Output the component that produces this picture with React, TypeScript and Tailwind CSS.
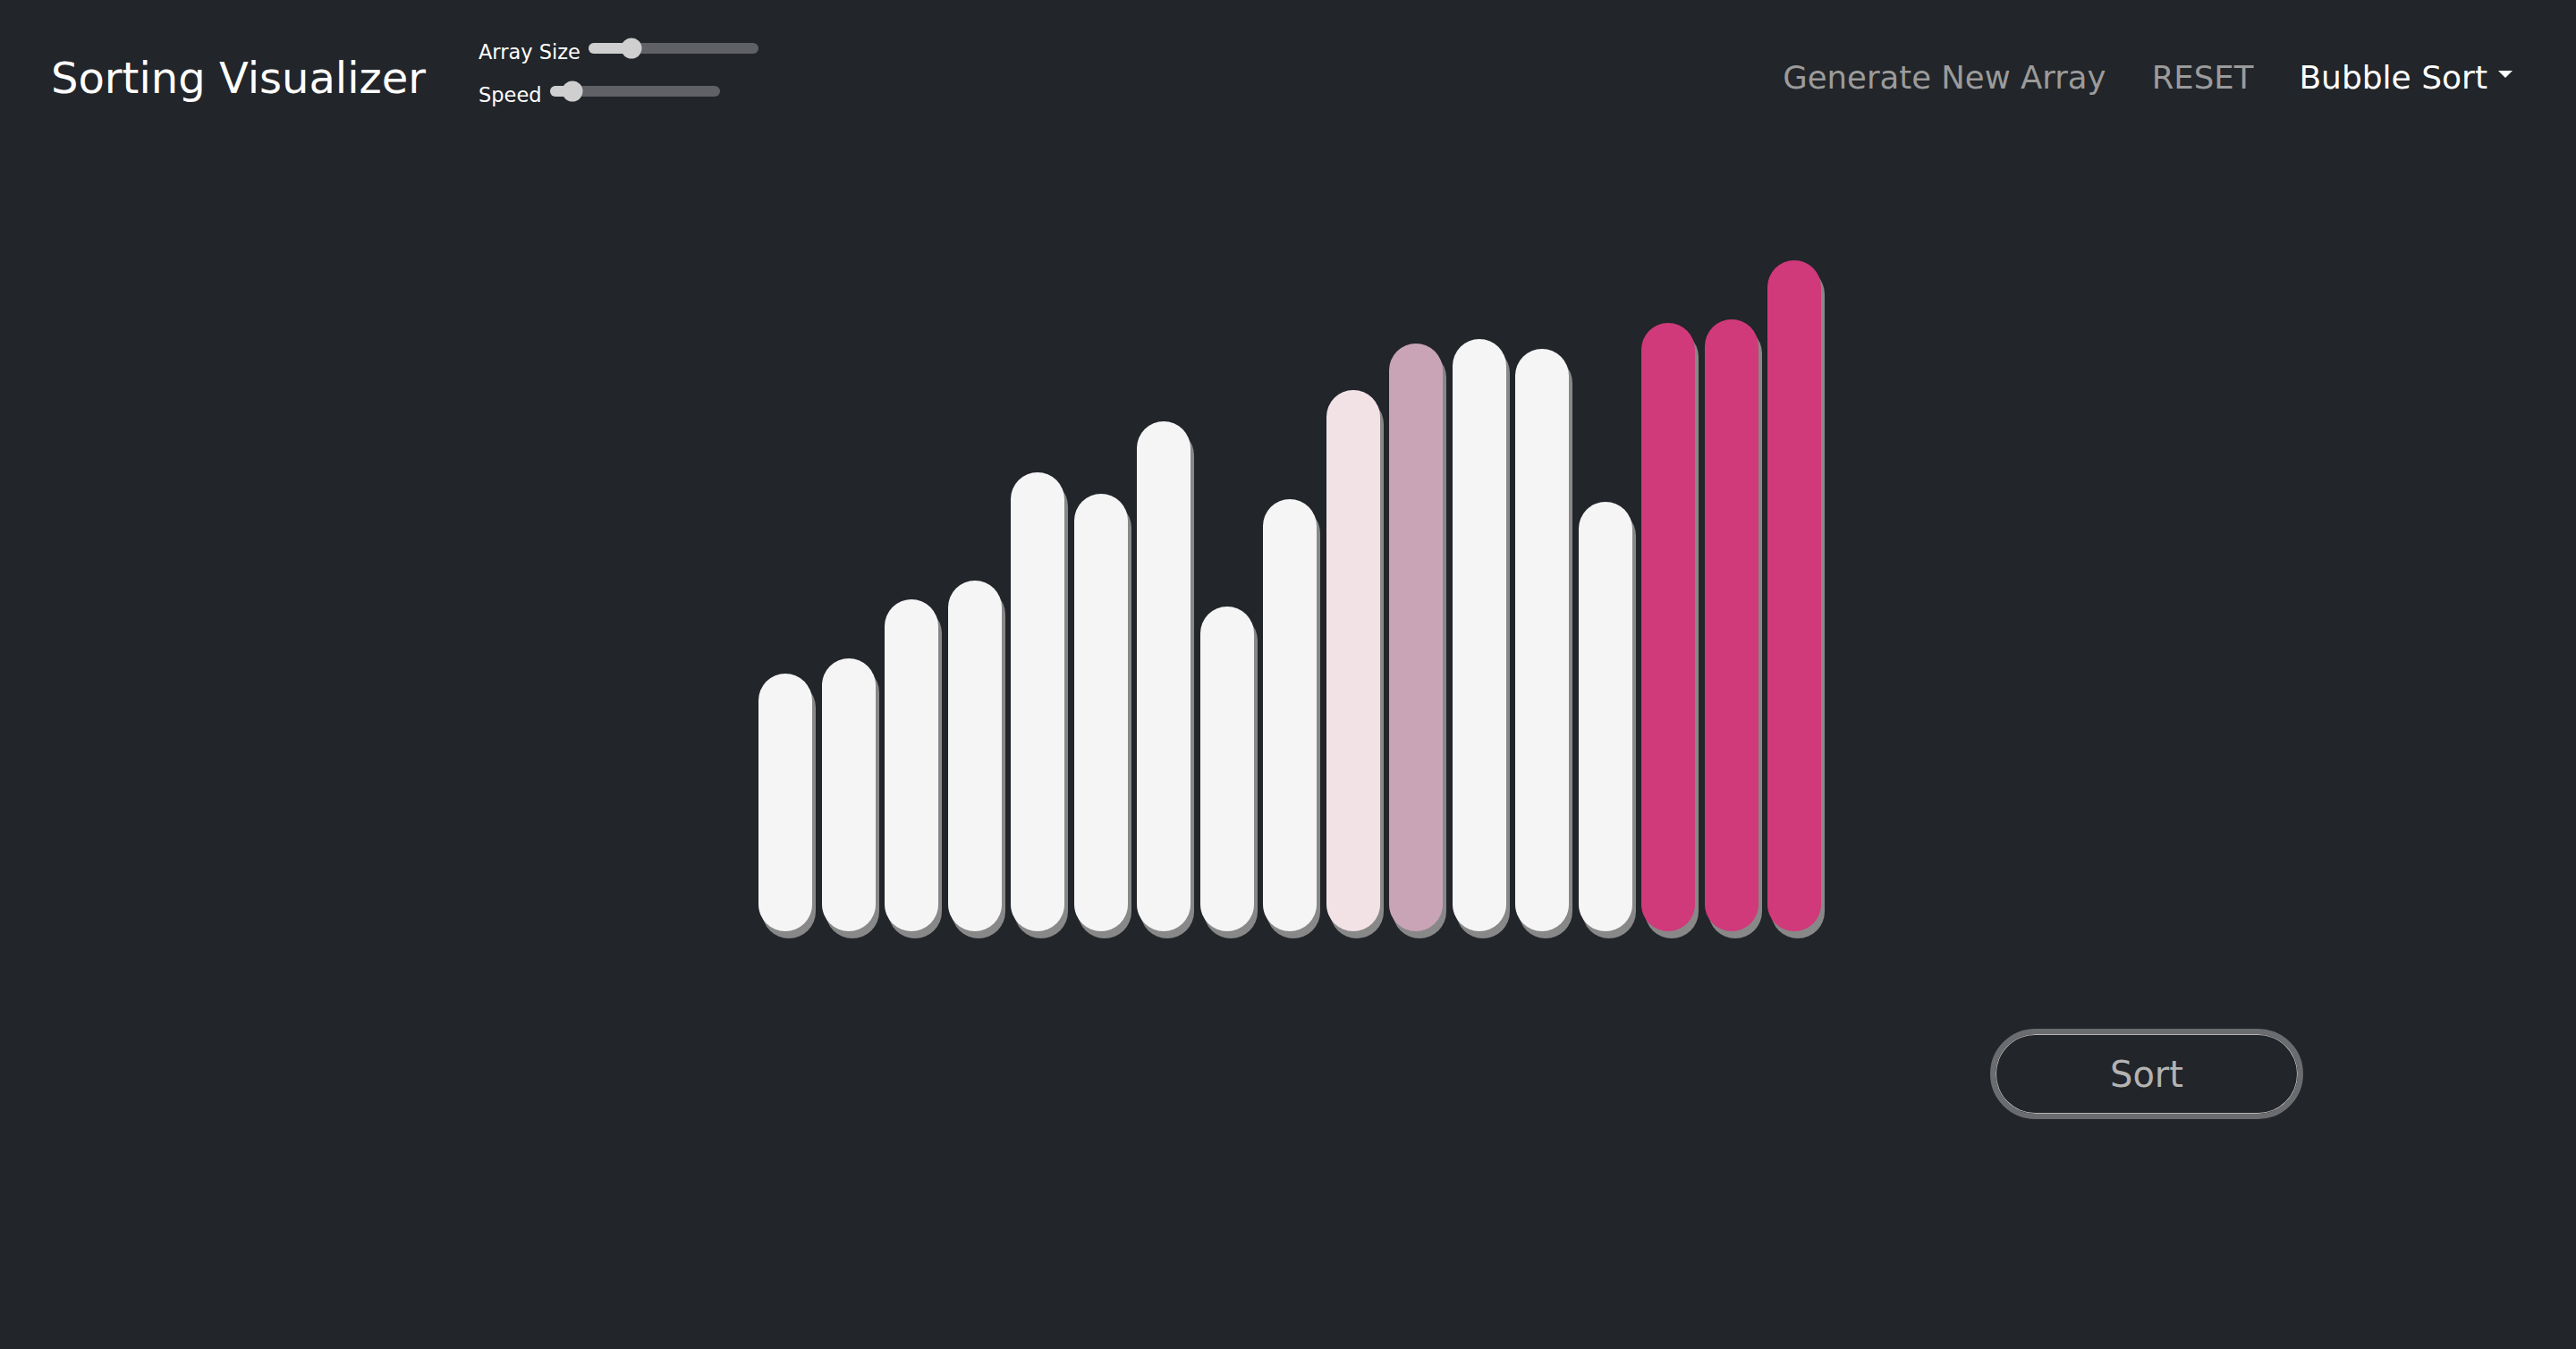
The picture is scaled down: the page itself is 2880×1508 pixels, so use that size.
import React from 'react';

type BarType = {
	height: number;
	tone: 'idle' | 'compare' | 'swap' | 'sorted';
};

const bars: BarType[] = [
	{ height: 288, tone: 'idle' },
	{ height: 305, tone: 'idle' },
	{ height: 371, tone: 'idle' },
	{ height: 392, tone: 'idle' },
	{ height: 513, tone: 'idle' },
	{ height: 489, tone: 'idle' },
	{ height: 570, tone: 'idle' },
	{ height: 363, tone: 'idle' },
	{ height: 483, tone: 'idle' },
	{ height: 605, tone: 'compare' },
	{ height: 657, tone: 'swap' },
	{ height: 662, tone: 'idle' },
	{ height: 651, tone: 'idle' },
	{ height: 480, tone: 'idle' },
	{ height: 680, tone: 'sorted' },
	{ height: 684, tone: 'sorted' },
	{ height: 750, tone: 'sorted' },
];

const toneClass = {
	idle: 'bg-[#f5f5f5]',
	compare: 'bg-[#f2e2e6]',
	swap: 'bg-[#c8a4b6]',
	sorted: 'bg-[#d0397a]',
};

function Slider(props: { label: string; value: number }) {
	return (
		<div className="flex items-center h-[24px] gap-[9px]">
			<span className="text-white text-[22.5px] leading-none mt-[8px]">{props.label}</span>
			<div className="relative w-[190px] h-[12px] rounded-full bg-[#606166]">
				<div
					className="absolute left-0 top-0 h-full rounded-full bg-[#cfcfcf]"
					style={{ width: props.value }}
				/>
				<div
					className="absolute top-1/2 w-[23px] h-[23px] -translate-x-1/2 -translate-y-1/2 rounded-full bg-[#cfcfcf]"
					style={{ left: props.value }}
				/>
			</div>
		</div>
	);
}

function Header() {
	return (
		<header className="flex items-center h-[174px] pl-[57px] pr-[71px]">
			<h1 className="text-white text-[48px] leading-none font-normal">Sorting Visualizer</h1>
			<div className="flex flex-col gap-[24px] self-start mt-[42px] ml-[59px]">
				<Slider label="Array Size" value={48} />
				<Slider label="Speed" value={25} />
			</div>
			<nav className="ml-auto flex items-center gap-[51px] text-[35.5px] leading-none">
				<a className="text-[#9b9b9b]">Generate New Array</a>
				<a className="text-[#9b9b9b]">RESET</a>
				<button className="flex items-center gap-[12px] text-white text-[36px]">
					Bubble Sort
					<span className="w-0 h-0 border-x-[8px] border-t-[8px] border-x-transparent border-t-white mb-[8px]" />
				</button>
			</nav>
		</header>
	);
}

function Bars() {
	return (
		<div className="flex justify-center items-end h-[867px] gap-[10.5px] pl-[4px]">
			{bars.map((bar, i) => (
				<div
					key={i}
					className={`w-[60px] rounded-full shadow-[4px_8px_0_#888888] ${toneClass[bar.tone]}`}
					style={{ height: bar.height }}
				/>
			))}
		</div>
	);
}

export default function App() {
	return (
		<div className="min-h-[1508px] bg-[#222529] font-['DejaVu_Sans',sans-serif]">
			<Header />
			<main>
				<Bars />
				<div className="flex justify-end pr-[305px] mt-[109px]">
					<button className="w-[350px] h-[101px] rounded-full border-[6px] border-[#6b6c6f] shadow-[inset_0_0_0_1px_#b5b5b5] text-[40px] text-[#b3b3b3] leading-none">
						Sort
					</button>
				</div>
			</main>
		</div>
	);
}
